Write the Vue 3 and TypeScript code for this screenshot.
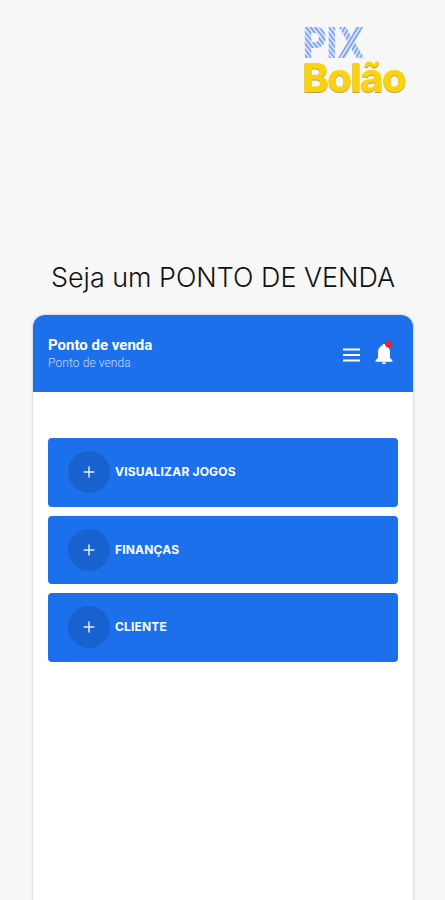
<script setup lang="ts">
const actions: string[] = ['VISUALIZAR JOGOS', 'FINANÇAS', 'CLIENTE']
</script>

<template>
  <main class="page">
    <svg class="logo" width="112" height="84" viewBox="-4 -6 112 84" role="img" aria-label="PIX Bolão">
      <defs>
        <pattern id="stripes" width="3.600" height="4" patternUnits="userSpaceOnUse" patternTransform="rotate(-38)">
          <rect width="3.600" height="4" fill="#dfe9ff" />
          <rect width="1.900" height="4" fill="#7da3ef" />
        </pattern>
        <pattern id="stripes-x" width="3.600" height="4" patternUnits="userSpaceOnUse" patternTransform="rotate(32)">
          <rect width="3.600" height="4" fill="#dfe9ff" />
          <rect width="1.900" height="4" fill="#7da3ef" />
        </pattern>
      </defs>
      <text class="pix" y="33.300" textLength="62" lengthAdjust="spacingAndGlyphs" x="-0.300"><tspan>PI</tspan><tspan class="pix-x">X</tspan></text>
      <text class="bolao" x="-0.800" y="66.800" textLength="104.500" lengthAdjust="spacing">Bolão</text>
    </svg>

    <h1 class="headline">Seja um PONTO DE VENDA</h1>

    <section class="phone">
      <header class="bar">
        <div class="titles">
          <h2 class="title">Ponto de venda</h2>
          <p class="subtitle">Ponto de venda</p>
        </div>
        <svg class="menu" width="17" height="14" viewBox="0 0 17 14">
          <path d="M0 1.500h17M0 7h17M0 12.500h17" stroke="#fff" stroke-width="2" />
        </svg>
        <svg class="bell" width="18" height="26" viewBox="0 0 18 26">
          <path d="M9 4c-1 0-1.600.6-1.700 1.400C4.500 6.200 3 8.800 3 12v6L.6 20.200v1.500h16.800v-1.500L15 18v-6c0-3.200-1.500-5.800-4.300-6.600C10.600 4.600 10 4 9 4zM7 22.300h4a2 2 0 0 1-4 0z" fill="#fff" />
          <circle cx="13.600" cy="3.900" r="3.500" fill="#f2202c" />
        </svg>
      </header>

      <div class="actions">
        <button v-for="action in actions" :key="action" class="action" type="button">
          <span class="disc">
            <svg width="12" height="12" viewBox="0 0 12 12">
              <path d="M6 .6v10.800M.6 6h10.800" stroke="#e4edff" stroke-width="1.500" />
            </svg>
          </span>
          <span class="label">{{ action }}</span>
        </button>
      </div>
    </section>
  </main>
</template>

<style>
body {
  background: #f7f7f7;
}
</style>

<style scoped>
.page {
  box-sizing: border-box;
  height: 900px;
  overflow: hidden;
  padding: 19px 32px 0 33px;
  display: flex;
  flex-direction: column;
  background: #f7f7f7;
  font-family: Inter, "Liberation Sans", sans-serif;
}
.logo {
  display: block;
  flex: none;
  align-self: flex-end;
  margin-right: 2px;
  overflow: visible;
}
.pix {
  font: 800 42px Inter, sans-serif;
  fill: url(#stripes);
}
.pix-x {
  fill: url(#stripes-x);
}
.bolao {
  font: 800 40px Inter, sans-serif;
  fill: #fbd20f;
  filter: drop-shadow(0.4px 1px 0.4px #b9a04a);
}
.headline {
  margin: 156px 0 0 18px;
  height: 36px;
  font-size: 26.900px;
  line-height: 36px;
  font-weight: 300;
  white-space: nowrap;
  color: #111;
}
.phone {
  flex: none;
  height: 620px;
  margin-top: 20px;
  border-radius: 12px 12px 0 0;
  background: #fff;
  box-shadow: 0 0 3px rgba(0, 0, 0, 0.26);
}
.bar {
  box-sizing: border-box;
  height: 77px;
  padding: 0 20px 0 15px;
  display: flex;
  align-items: center;
  border-radius: 12px 12px 0 0;
  background: #1d70eb;
  color: #fff;
}
.titles {
  flex: 1;
}
.title,
.subtitle {
  margin: 0;
  font-family: Roboto, sans-serif;
  white-space: nowrap;
}
.title {
  font-size: 15px;
  line-height: 20px;
  font-weight: 700;
}
.subtitle {
  font-size: 12px;
  line-height: 17px;
  font-weight: 300;
  letter-spacing: 0.100px;
  color: #c9dcff;
}
.menu {
  margin: 2px 15px 0 0;
}
.bell {
  margin-bottom: 2px;
}
.actions {
  padding: 46px 15.500px 0 15px;
  display: grid;
  gap: 9px;
}
.action {
  height: 68.500px;
  padding: 0 0 0 19.500px;
  display: flex;
  align-items: center;
  gap: 5.500px;
  border: 0;
  border-radius: 4px;
  background: #1d70eb;
  color: #fff;
  font: 700 12px/16px Inter, sans-serif;
  letter-spacing: 0.180px;
}
.disc {
  width: 42px;
  height: 42px;
  display: grid;
  place-items: center;
  border-radius: 50%;
  background: #1862cf;
}
</style>
